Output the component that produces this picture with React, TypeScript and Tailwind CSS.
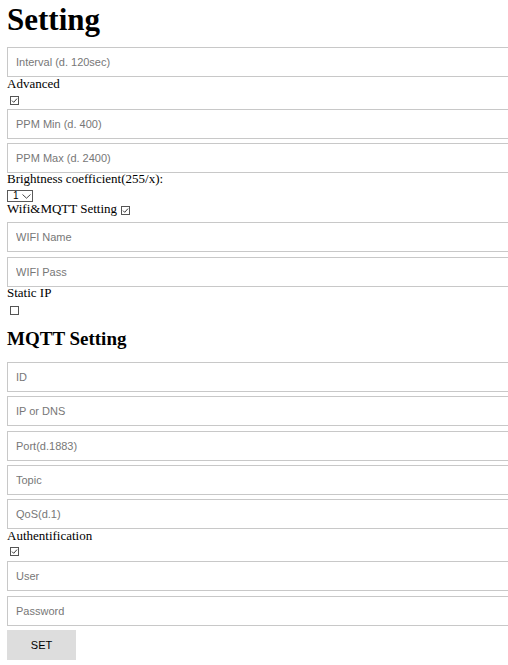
import React from "react";

const serif = "font-['Liberation_Serif','Times_New_Roman',serif]";

function Field({ placeholder, className = "" }: { placeholder: string; className?: string }) {
  return (
    <input
      type="text"
      placeholder={placeholder}
      className={`block h-[30px] w-[calc(100%+24px)] border border-[#c8c8c8] bg-white pl-[8px] font-['Liberation_Sans',Arial,sans-serif] text-[11px] text-black outline-none placeholder:text-[#777777] ${className}`}
    />
  );
}

function Check({ checked, className = "" }: { checked: boolean; className?: string }) {
  return (
    <svg width="9" height="9" viewBox="0 0 9 9" className={`block shrink-0 ${className}`}>
      <rect x="0.5" y="0.5" width="8" height="8" fill="#fff" stroke="#555555" strokeWidth="1" />
      {checked && (
        <polyline points="2,4.6 3.7,6.3 7,2.6" fill="none" stroke="#222" strokeWidth="0.9" />
      )}
    </svg>
  );
}

function Label({ children, className = "" }: { children: React.ReactNode; className?: string }) {
  return <div className={`text-[13px] leading-[12px] text-black ${className}`}>{children}</div>;
}

export default function App() {
  return (
    <div className={`w-full overflow-hidden bg-white px-[7px] pb-[5px] ${serif}`}>
      <h1 className="h-[40px] text-[31px] font-bold leading-[40px] text-black">Setting</h1>
      <Field placeholder="Interval (d. 120sec)" className="mt-[7px]" />
      <Label className="mt-[1px]">Advanced</Label>
      <Check checked className="ml-[3px] mt-[6px]" />
      <Field placeholder="PPM Min (d. 400)" className="mt-[4px]" />
      <Field placeholder="PPM Max (d. 2400)" className="mt-[4px]" />
      <Label>Brightness coefficient(255/x):</Label>
      <div className="mt-[5px] flex h-[12px] w-[26px] items-center border border-[#5a5a5a] bg-white font-['Liberation_Sans',Arial,sans-serif] text-[10px] leading-[10px] text-black">
        <span className="ml-[5px]">1</span>
        <svg width="9" height="5" viewBox="0 0 9 5" className="ml-[3px]">
          <polyline points="0.5,0.5 4.5,4.2 8.5,0.5" fill="none" stroke="#333" strokeWidth="0.9" />
        </svg>
      </div>
      <div className="mt-[1px] flex items-start">
        <Label>Wifi&amp;MQTT Setting</Label>
        <Check checked className="ml-[4px] mt-[3px]" />
      </div>
      <Field placeholder="WIFI Name" className="mt-[7px]" />
      <Field placeholder="WIFI Pass" className="mt-[5px]" />
      <Label>Static IP</Label>
      <Check checked={false} className="ml-[3px] mt-[7px]" />
      <h2 className="mt-[12px] h-[24px] text-[19px] font-bold leading-[24px] text-black">MQTT Setting</h2>
      <Field placeholder="ID" className="mt-[11px]" />
      <Field placeholder="IP or DNS" className="mt-[4px]" />
      <Field placeholder="Port(d.1883)" className="mt-[5px]" />
      <Field placeholder="Topic" className="mt-[4px]" />
      <Field placeholder="QoS(d.1)" className="mt-[4px]" />
      <Label className="mt-[1px]">Authentification</Label>
      <Check checked className="ml-[3px] mt-[5px]" />
      <Field placeholder="User" className="mt-[5px]" />
      <Field placeholder="Password" className="mt-[5px]" />
      <button
        type="button"
        className="mt-[4px] block h-[30px] w-[69px] bg-[#dddddd] font-['Liberation_Sans',Arial,sans-serif] text-[11px] text-black"
      >
        SET
      </button>
    </div>
  );
}
